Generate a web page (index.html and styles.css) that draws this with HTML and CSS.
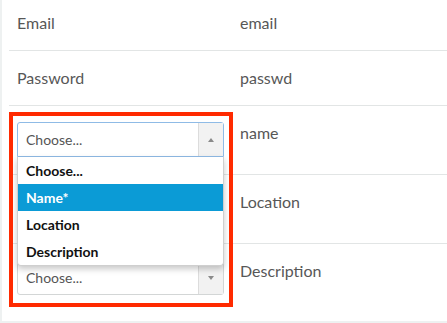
FILE: index.html
```html
<!DOCTYPE html>
<html lang="en">
<head>
    <meta charset="UTF-8">
    <meta name="viewport" content="width=device-width, initial-scale=1.0">
    <title>Field mapping</title>
    <link rel="stylesheet" href="styles.css">
</head>
<body>
    <div class="panel">
        <table class="mapping">
            <tbody>
                <tr>
                    <td class="field">Email</td>
                    <td class="column">email</td>
                </tr>
                <tr>
                    <td class="field">Password</td>
                    <td class="column">passwd</td>
                </tr>
                <tr>
                    <td class="field select-cell">
                        <div class="picker">
                            <div class="select open">
                                <span class="select-value">Choose...</span>
                                <span class="select-arrow"><span class="tri up"></span></span>
                            </div>
                            <!-- open dropdown list -->
                            <ul class="options">
                                <li>Choose...</li>
                                <li class="active">Name*</li>
                                <li>Location</li>
                                <li>Description</li>
                            </ul>
                        </div>
                    </td>
                    <td class="column">name</td>
                </tr>
                <tr>
                    <td class="field select-cell">
                        <!-- covered by the open list above -->
                        <div class="select covered">
                            <span class="select-value">Choose...</span>
                            <span class="select-arrow"><span class="tri"></span></span>
                        </div>
                    </td>
                    <td class="column">Location</td>
                </tr>
                <tr>
                    <td class="field select-cell">
                        <div class="select">
                            <span class="select-value">Choose...</span>
                            <span class="select-arrow"><span class="tri"></span></span>
                        </div>
                    </td>
                    <td class="column">Description</td>
                </tr>
            </tbody>
        </table>

        <!-- annotation box -->
        <div class="highlight"></div>
    </div>
</body>
</html>
```

FILE: styles.css
```css
/* page */
body {
    font-family: Lato, "Open Sans", sans-serif;
    background-color: #eef1f1;
    margin: 0;
    padding: 0;
    overflow: hidden;
}

.panel {
    position: relative;
    background: #fff;
    margin: -4px 0 2px 2px;
    padding: 0 0 9px 7px;
}

.mapping {
    width: 460px;
    border-collapse: collapse;
}

.mapping td {
    padding: 16px 8px;
    font-size: 16px;
    line-height: 22px;
    color: #575757;
    vertical-align: top;
    border-bottom: 1px solid #e2e5e5;
    text-align: left;
}

.mapping tr:last-child td {
    border-bottom: none;
}

.mapping td.field {
    width: 207px;
}

.mapping td.select-cell {
    padding-top: 16px;
    padding-bottom: 17px;
}

/* select box */
.picker {
    position: relative;
}

.select {
    display: flex;
    height: 35px;
    box-sizing: border-box;
    border: 1px solid #d3d6d6;
    border-radius: 3px;
    background: #fff;
}

.select.open {
    border-color: #8fbbe6;
    border-radius: 3px 3px 0 0;
}

.select.covered {
    visibility: hidden;
}

.select-value {
    flex: 1;
    padding-left: 8px;
    font-size: 14px;
    line-height: 33px;
    color: #555;
}

.select-arrow {
    width: 24px;
    display: flex;
    align-items: center;
    justify-content: center;
    background: #f2f2f2;
    border-left: 1px solid #dcdcdc;
}

.tri {
    width: 0;
    height: 0;
    border-left: 3px solid transparent;
    border-right: 3px solid transparent;
    border-top: 4px solid #8a8a8a;
}

.tri.up {
    border-top: none;
    border-bottom: 4px solid #8a8a8a;
}

/* dropdown */
.options {
    position: absolute;
    top: 35px;
    left: 0;
    right: 0;
    margin: 0;
    padding: 0;
    list-style: none;
    background: #fff;
    border: 1px solid #cfcfcf;
    border-top: none;
    border-radius: 0 0 4px 4px;
    box-shadow: 0 3px 6px rgba(0, 0, 0, 0.22);
    z-index: 2;
}

.options li {
    height: 27px;
    line-height: 27px;
    padding-left: 8px;
    font-size: 14px;
    font-weight: bold;
    color: #111;
}

.options li.active {
    background-color: #0b9bd6;
    color: #fff;
}

.options li:last-child {
    border-radius: 0 0 4px 4px;
}

/* red annotation frame */
.highlight {
    position: absolute;
    left: 7px;
    top: 116px;
    width: 224px;
    height: 195px;
    box-sizing: border-box;
    border: 4px solid #ff2a00;
    z-index: 3;
}
```
